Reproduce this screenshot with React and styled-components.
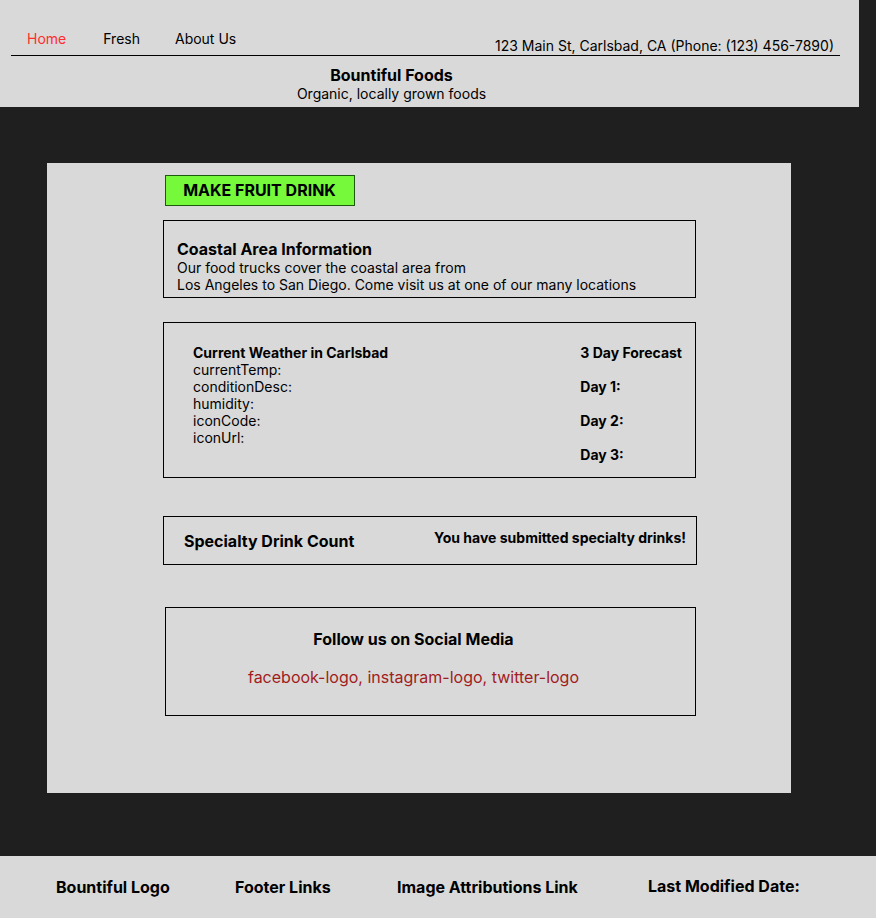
import styled, { createGlobalStyle } from "styled-components";

const GlobalStyle = createGlobalStyle`
    body {
        margin: 0;
        background: #1f1f1f;
        font-family: Inter, "Noto Sans", sans-serif;
        color: #000;
    }
`

const Page = styled.div`
    width: 876px;
    min-height: 918px;
    background: #1f1f1f;
    display: flex;
    flex-direction: column;
`

const Header = styled.header`
    width: 859px;
    height: 107px;
    background: #d9d9d9;
    box-sizing: border-box;
    padding-top: 30px;
`

const NavBar = styled.div`
    margin: 0 19px 0 11px;
    border-bottom: 1.5px solid #000;
    display: flex;
    align-items: flex-end;
    justify-content: space-between;
    height: 25px;
`

const NavList = styled.nav`
    display: flex;
    align-self: flex-start;
`

const NavLink = styled.a`
    font-size: 14px;
    line-height: 18px;
    color: ${props => (props.active ? "#ff2d2d" : "#000")};
    margin-left: ${props => props.offset}px;
    text-decoration: none;
`

const Address = styled.span`
    font-size: 14px;
    line-height: 18px;
    margin-right: 6px;
`

const Brand = styled.div`
    text-align: center;
    margin-top: 10px;
    margin-right: 76px;
    h1 {
        margin: 0;
        font-size: 16px;
        line-height: 19px;
        font-weight: 700;
    }
    p {
        margin: 0;
        font-size: 14px;
        line-height: 18px;
    }
`

const Main = styled.main`
    padding: 56px 0 63px 47px;
`

const Panel = styled.section`
    width: 744px;
    height: 630px;
    background: #d9d9d9;
    box-sizing: border-box;
    padding: 12px 0 0 116px;
    display: flex;
    flex-direction: column;
    align-items: flex-start;
`

const DrinkButton = styled.button`
    margin-left: 2px;
    width: 190px;
    height: 31px;
    background: #76f83b;
    border: 1px solid #1c5a10;
    font-family: Inter, sans-serif;
    font-weight: 700;
    font-size: 16px;
    text-transform: uppercase;
    padding: 0 1px 2px 0;
    color: #000;
`

const Box = styled.div`
    box-sizing: border-box;
    border: 1px solid #000;
    width: ${props => props.w}px;
    height: ${props => props.h}px;
    margin-top: ${props => props.top}px;
    margin-left: ${props => props.left || 0}px;
`

const Coastal = styled(Box)`
    padding: 18px 0 0 13px;
    h2 {
        margin: 0;
        font-size: 16px;
        line-height: 20px;
        font-weight: 700;
    }
    p {
        margin: 0;
        font-size: 14px;
        line-height: 17px;
    }
`

const Weather = styled(Box)`
    padding: 21px 13px 0 29px;
    display: flex;
    justify-content: space-between;
`

const Column = styled.div`
    display: flex;
    flex-direction: column;
    gap: ${props => props.gap || 0}px;
`

const Line = styled.span`
    font-size: 14px;
    line-height: 17px;
    font-weight: ${props => (props.bold ? 700 : 400)};
`

const Specialty = styled(Box)`
    display: flex;
    justify-content: space-between;
    padding: 0 10px 0 20px;
    h3 {
        margin: 14px 0 0;
        font-size: 16px;
        line-height: 20px;
        font-weight: 700;
    }
    span {
        margin-top: 12px;
        font-size: 14px;
        line-height: 17px;
        font-weight: 700;
    }
`

const Social = styled(Box)`
    display: flex;
    flex-direction: column;
    align-items: center;
    padding: 21px 34px 0 0;
    h3 {
        margin: 0;
        font-size: 16px;
        line-height: 20px;
        font-weight: 700;
    }
    p {
        margin: 18px 0 0;
        font-size: 16px;
        line-height: 20px;
        color: #a11c1c;
    }
`

const Footer = styled.footer`
    height: 62px;
    background: #d9d9d9;
    display: flex;
    align-items: center;
    padding-left: 56px;
`

const FooterItem = styled.span`
    font-size: 16px;
    font-weight: 700;
    width: ${props => props.w}px;
    margin-top: ${props => props.top || 0}px;
`

const App = () => {
    const navs = [
        { label: "Home", offset: 16, active: true },
        { label: "Fresh", offset: 37 },
        { label: "About Us", offset: 35 },
    ];
    const current = ["currentTemp:", "conditionDesc:", "humidity:", "iconCode:", "iconUrl:"];

    return (
        <Page>
            <GlobalStyle />
            <Header>
                <NavBar>
                    <NavList>
                        {navs.map(n => (
                            <NavLink key={n.label} offset={n.offset} active={n.active}>{n.label}</NavLink>
                        ))}
                    </NavList>
                    <Address>123 Main St, Carlsbad, CA (Phone: (123) 456-7890)</Address>
                </NavBar>
                <Brand>
                    <h1>Bountiful Foods</h1>
                    <p>Organic, locally grown foods</p>
                </Brand>
            </Header>
            <Main>
                <Panel>
                    <DrinkButton>Make Fruit Drink</DrinkButton>
                    <Coastal w={533} h={78} top={14}>
                        <h2>Coastal Area Information</h2>
                        <p>Our food trucks cover the coastal area from</p>
                        <p>Los Angeles to San Diego. Come visit us at one of our many locations</p>
                    </Coastal>
                    <Weather w={533} h={156} top={24}>
                        <Column>
                            <Line bold>Current Weather in Carlsbad</Line>
                            {current.map(c => <Line key={c}>{c}</Line>)}
                        </Column>
                        <Column gap={17}>
                            <Line bold>3 Day Forecast</Line>
                            <Line bold>Day 1:</Line>
                            <Line bold>Day 2:</Line>
                            <Line bold>Day 3:</Line>
                        </Column>
                    </Weather>
                    <Specialty w={534} h={49} top={38}>
                        <h3>Specialty Drink Count</h3>
                        <span>You have submitted specialty drinks!</span>
                    </Specialty>
                    <Social w={531} h={109} top={42} left={2}>
                        <h3>Follow us on Social Media</h3>
                        <p>facebook-logo, instagram-logo, twitter-logo</p>
                    </Social>
                </Panel>
            </Main>
            <Footer>
                <FooterItem w={179}>Bountiful Logo</FooterItem>
                <FooterItem w={162}>Footer Links</FooterItem>
                <FooterItem w={251}>Image Attributions Link</FooterItem>
                <FooterItem w={170} top={-2}>Last Modified Date:</FooterItem>
            </Footer>
        </Page>
    );
}

export default App;
